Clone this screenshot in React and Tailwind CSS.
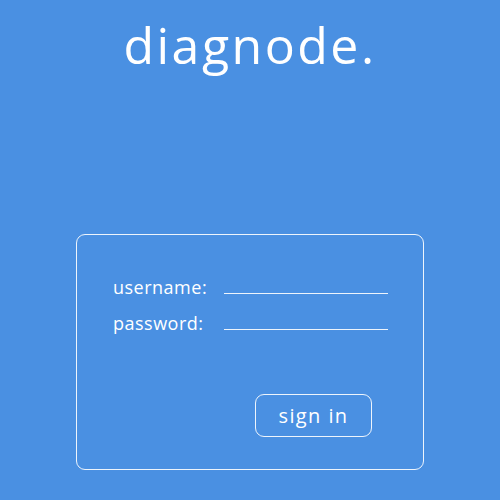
import { useState } from 'react';

const App = () => {
  const [username, setUsername] = useState('');
  const [password, setPassword] = useState('');

  return (
    <div className="flex h-[500px] w-[500px] flex-col items-center bg-[#4a90e2] font-['Open_Sans',sans-serif] text-white">
      <h1 className="mt-[12px] text-[50px] leading-[66px] font-normal tracking-[2.5px]">diagnode.</h1>

      <form className="mt-[156px] flex h-[236px] w-[348px] flex-col rounded-[9px] border border-white/90 pl-[36px] pr-[35px] pt-[37px]">
        <label className="flex items-end justify-between">
          <span className="mb-[-3px] text-[18px] leading-[20px] tracking-[0.5px]">username:</span>
          <input
            value={username}
            onChange={(e) => setUsername(e.target.value)}
            className="h-[22px] w-[164px] border-b border-white/90 bg-transparent text-[15px] text-white outline-none"
          />
        </label>
        <label className="mt-[14px] flex items-end justify-between">
          <span className="mb-[-3px] text-[18px] leading-[20px] tracking-[0.5px]">password:</span>
          <input
            type="password"
            value={password}
            onChange={(e) => setPassword(e.target.value)}
            className="h-[22px] w-[164px] border-b border-white/90 bg-transparent text-[15px] text-white outline-none"
          />
        </label>

        <div className="mt-[64px] flex justify-end pr-[16px]">
          <button
            type="button"
            className="h-[43px] w-[117px] rounded-[9px] border border-white/90 text-[20px] leading-none tracking-[1.4px]"
          >
            sign in
          </button>
        </div>
      </form>
    </div>
  );
};

export default App;
